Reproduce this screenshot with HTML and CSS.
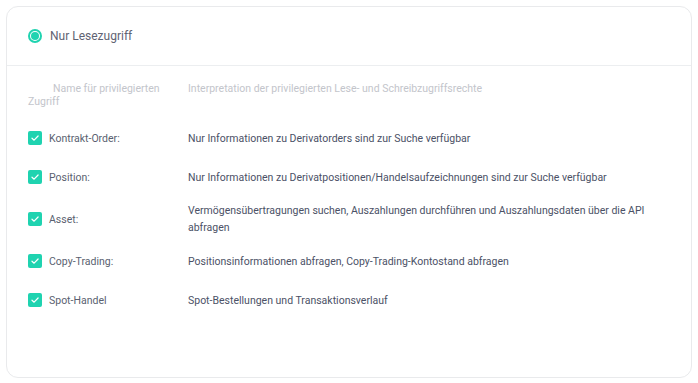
FILE: index.html
```html
<!DOCTYPE html>
<html>
<head>
    <title>API-Berechtigungen</title>
    <link rel="stylesheet" href="styles.css">
</head>
<body>
    <div class="card">
        <div class="card-header">
            <span class="radio"><span class="radio-dot"></span></span>
            <span class="radio-label">Nur Lesezugriff</span>
        </div>

        <div class="perm-table">
            <div class="perm-head">
                <div class="col-name">Name für privilegierten Zugriff</div>
                <div class="col-desc">Interpretation der privilegierten Lese- und Schreibzugriffsrechte</div>
            </div>

            <div class="perm-row">
                <div class="col-name"><span class="check"><svg viewBox="0 0 14 14" width="14" height="14"><path d="M4 7.2l2.1 2 4-4.2" fill="none" stroke="#fff" stroke-width="1.2" stroke-linecap="round" stroke-linejoin="round"/></svg></span>Kontrakt-Order:</div>
                <div class="col-desc">Nur Informationen zu Derivatorders sind zur Suche verfügbar</div>
            </div>
            <div class="perm-row">
                <div class="col-name"><span class="check"><svg viewBox="0 0 14 14" width="14" height="14"><path d="M4 7.2l2.1 2 4-4.2" fill="none" stroke="#fff" stroke-width="1.2" stroke-linecap="round" stroke-linejoin="round"/></svg></span>Position:</div>
                <div class="col-desc">Nur Informationen zu Derivatpositionen/Handelsaufzeichnungen sind zur Suche verfügbar</div>
            </div>
            <div class="perm-row">
                <div class="col-name"><span class="check"><svg viewBox="0 0 14 14" width="14" height="14"><path d="M4 7.2l2.1 2 4-4.2" fill="none" stroke="#fff" stroke-width="1.2" stroke-linecap="round" stroke-linejoin="round"/></svg></span>Asset:</div>
                <div class="col-desc">Vermögensübertragungen suchen, Auszahlungen durchführen und Auszahlungsdaten über die API abfragen</div>
            </div>
            <div class="perm-row">
                <div class="col-name"><span class="check"><svg viewBox="0 0 14 14" width="14" height="14"><path d="M4 7.2l2.1 2 4-4.2" fill="none" stroke="#fff" stroke-width="1.2" stroke-linecap="round" stroke-linejoin="round"/></svg></span>Copy-Trading:</div>
                <div class="col-desc">Positionsinformationen abfragen, Copy-Trading-Kontostand abfragen</div>
            </div>
            <div class="perm-row">
                <div class="col-name"><span class="check"><svg viewBox="0 0 14 14" width="14" height="14"><path d="M4 7.2l2.1 2 4-4.2" fill="none" stroke="#fff" stroke-width="1.2" stroke-linecap="round" stroke-linejoin="round"/></svg></span>Spot-Handel</div>
                <div class="col-desc">Spot-Bestellungen und Transaktionsverlauf</div>
            </div>
        </div>
    </div>
</body>
</html>
```

FILE: styles.css
```css
body {
    margin: 0;
    padding: 6px 6px 0 6px;
    background-color: #fff;
    font-family: Roboto, "Noto Sans", sans-serif;
}

.card {
    width: 686px;
    height: 372px;
    box-sizing: border-box;
    border: 1px solid #e9eaec;
    border-radius: 12px;
    background: white;
}

.card-header {
    display: flex;
    align-items: center;
    height: 58px;
    padding-left: 21px;
    border-bottom: 1px solid #eceef0;
}

.radio {
    width: 14px;
    height: 14px;
    box-sizing: border-box;
    border: 2px solid #1fd3b0;
    border-radius: 50%;
    display: flex;
    align-items: center;
    justify-content: center;
    margin-right: 8px;
}

.radio-dot {
    width: 8px;
    height: 8px;
    border-radius: 50%;
    background-color: #1fd3b0;
}

.radio-label {
    font-size: 12px;
    color: #5f6373;
}

.perm-table {
    padding: 16px 0 0 21px;
}

.perm-head {
    display: flex;
    font-size: 10.5px;
    line-height: 13px;
    color: #c3c5cb;
    padding-bottom: 10.5px;
}

.perm-head .col-name {
    text-indent: 25px;
}

.col-name {
    width: 160px;
    flex-shrink: 0;
}

.col-desc {
    flex: 1;
    padding-right: 40px;
}

.perm-row {
    display: flex;
    align-items: center;
    box-sizing: border-box;
    min-height: 39px;
    padding: 5.5px 0;
    font-size: 10.5px;
    line-height: 17px;
}

.perm-row .col-name {
    display: flex;
    align-items: center;
    color: #5a5f70;
}

.perm-row .col-desc {
    color: #4b5166;
}

.check {
    width: 14px;
    height: 14px;
    border-radius: 2px;
    background-color: #1fd3b0;
    margin-right: 7px;
    display: flex;
}
```
